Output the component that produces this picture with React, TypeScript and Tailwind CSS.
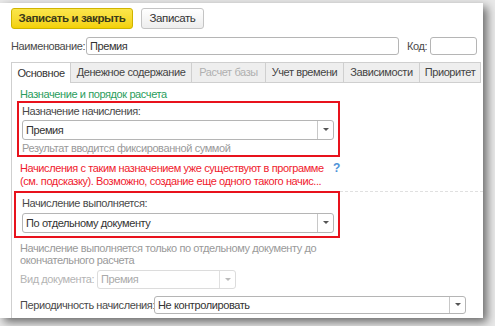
import React from "react";

function Drop({ disabled }: { disabled?: boolean }) {
  return (
    <div className={`w-[16px] h-full flex items-center justify-center border-l ${disabled ? "border-[#e0e0e0]" : "border-[#c8c8c8]"}`}>
      <svg width="6" height="4" viewBox="0 0 6 4">
        <path d="M0 0 L6 0 L3 3 Z" fill={disabled ? "#bbb" : "#555"} />
      </svg>
    </div>
  );
}

function Select({ value, className, disabled }: { value: string; className: string; disabled?: boolean }) {
  return (
    <div className={`flex items-stretch bg-white rounded-[3px] border shrink-0 ${disabled ? "border-[#dcdcdc] text-[#aaa]" : "border-[#b5b5b5] text-[#333]"} ${className}`}>
      <div className="flex-1 pl-[3px] flex items-center leading-none whitespace-nowrap">{value}</div>
      <Drop disabled={disabled} />
    </div>
  );
}

export default function App() {
  const tabs = [
    { t: "Основное", w: 60, active: true },
    { t: "Денежное содержание", w: 121 },
    { t: "Расчет базы", w: 74, dis: true },
    { t: "Учет времени", w: 78 },
    { t: "Зависимости", w: 76 },
    { t: "Приоритет", w: 61 },
  ];
  return (
    <div className="w-[495px] h-[326px] overflow-hidden bg-[#e9e9e9] font-['Liberation_Sans',Arial,sans-serif] text-[11px] tracking-[-0.4px] text-[#4a4a4a] whitespace-nowrap">
      <div className="w-[483px] h-[315px] mt-[3px] bg-white shadow-[4px_4px_9px_rgba(0,0,0,0.55)] flex flex-col">
        <div className="mt-[5px] ml-[11px] flex gap-[8px]">
          <div className="w-[122px] h-[21px] rounded-[3px] border border-[#cfb400] bg-gradient-to-b from-[#fbe64a] to-[#f3d100] flex items-center justify-center text-[11.5px] font-bold text-[#3a3a1a]">
            Записать и закрыть
          </div>
          <div className="w-[63px] h-[21px] rounded-[3px] border border-[#c4c4c4] bg-gradient-to-b from-[#ffffff] to-[#ededed] flex items-center justify-center text-[11.5px] text-[#333]">
            Записать
          </div>
        </div>
        <div className="mt-[8px] ml-[11px] flex items-center h-[18px]">
          <span className="w-[75px]">Наименование:</span>
          <div className="w-[313px] h-[18px] border border-[#b5b5b5] rounded-[3px] pl-[3px] flex items-center text-[#333]">Премия</div>
          <span className="ml-[8px] w-[23px]">Код:</span>
          <div className="w-[47px] h-[18px] border border-[#b5b5b5] rounded-[3px]" />
        </div>
        <div className="mt-[7px] ml-[11px] flex h-[21px]">
          {tabs.map((x) => (
            <div
              key={x.t}
              style={{ width: x.w }}
              className={`shrink-0 flex items-center justify-center border-t border-r border-[#cfcfcf] first:border-l ${
                x.active ? "bg-white text-[#333]" : "bg-[#eeeeee] border-b " + (x.dis ? "text-[#b0b0b0]" : "text-[#444]")
              }`}
            >
              {x.t}
            </div>
          ))}
        </div>
        <div className="ml-[11px] flex-1 border-l border-[#cfcfcf] relative">
          <div className="pl-[8px] pt-[4px] text-[#2a9d5c] leading-[14px]">Назначение и порядок расчета</div>
          <div className="ml-[5px] w-[323px] h-[56px] border-2 border-[#e8121c] pl-[3px] pt-[1px]">
            <div className="leading-[14px]">Назначение начисления:</div>
            <Select value="Премия" className="mt-[2px] w-[312px] h-[20px]" />
            <div className="mt-[2px] leading-[12px] text-[#9a9a9a]">Результат вводится фиксированной суммой</div>
          </div>
          <div className="flex pl-[8px] mt-[5px]">
            <div className="w-[305px] text-[#f01a2e] leading-[13px]">
              Начисления с таким назначением уже существуют в программе
              <br />
              (см. подсказку). Возможно, создание еще одного такого начис...
            </div>
            <div className="ml-[8px] text-[#4f93d8] font-bold text-[12px] leading-[12px]">?</div>
          </div>
          <div className="flex items-start mt-[3px]">
            <div className="ml-[2px] w-[326px] h-[47px] border-2 border-[#e8121c] pl-[6px] pt-[3px] shrink-0">
              <div className="leading-[14px]">Начисление выполняется:</div>
              <Select value="По отдельному документу" className="mt-[3px] w-[312px] h-[20px]" />
            </div>
            <div className="flex-1 border-t border-dashed border-[#e0e0e0]" />
          </div>
          <div className="pl-[8px] mt-[4px] leading-[12px] text-[#9a9a9a]">
            Начисление выполняется только по отдельному документу до
            <br />
            окончательного расчета
          </div>
          <div className="pl-[8px] mt-[4px] flex items-center">
            <span className="w-[77px] text-[#b4b4b4]">Вид документа:</span>
            <Select value="Премия" disabled className="w-[139px] h-[19px]" />
          </div>
          <div className="pl-[8px] mt-[7px] flex items-center">
            <span className="w-[134px]">Периодичность начисления:</span>
            <Select value="Не контролировать" className="w-[312px] h-[18px]" />
          </div>
        </div>
      </div>
    </div>
  );
}
